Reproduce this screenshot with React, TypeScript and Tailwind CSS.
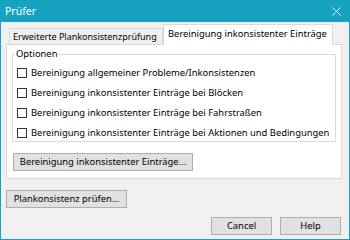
import React from "react";

const font = { fontFamily: '"Noto Sans", "Open Sans", Arial, sans-serif' };

function Check({ label }: { label: string }) {
  return (
    <div className="flex items-center h-[20px] whitespace-nowrap">
      <div className="w-[10px] h-[10px] border border-[#333] bg-white mr-[4px] shrink-0" />
      <span className="text-[9.4px] text-black leading-none">{label}</span>
    </div>
  );
}

function Btn({ label, w }: { label: string; w: string }) {
  return (
    <div
      className={`${w} h-[18px] border border-[#adadad] bg-[#e1e1e1] flex items-center justify-center text-[9.4px] text-black leading-none whitespace-nowrap`}
    >
      {label}
    </div>
  );
}

export default function App() {
  return (
    <div
      className="w-[350px] h-[240px] bg-[#f0f0f0] border-x border-b border-[#18a2c1] flex flex-col overflow-hidden"
      style={font}
    >
      <div className="h-[22px] bg-[#18a2c1] flex items-center justify-between pl-[4px] pr-[8px] shrink-0">
        <span className="text-white text-[10.5px] leading-none">Prüfer</span>
        <svg width="9" height="9" viewBox="0 0 9 9">
          <path d="M0.5 0.5L8.5 8.5M8.5 0.5L0.5 8.5" stroke="#ffffff" strokeWidth="1" />
        </svg>
      </div>
      <div className="pl-[5px] pr-[7px] pt-[1px]">
        <div className="flex items-end h-[21px] pl-[3px] whitespace-nowrap">
          <div className="h-[16px] w-[154px] border border-b-0 border-[#d9d9d9] bg-[#f0f0f0] flex items-center pl-[3px] text-[9px] leading-none overflow-hidden">
            Erweiterte Plankonsistenzprüfung
          </div>
          <div className="h-[21px] w-[170px] border border-b-0 border-[#d9d9d9] bg-white flex items-center pl-[4px] text-[9.4px] leading-none relative top-[1px] pb-[2px]">
            Bereinigung inkonsistenter Einträge
          </div>
        </div>
        <div className="h-[135px] border border-[#d9d9d9] bg-white px-[5px] pt-[9px]">
          <div className="relative border border-[#dcdcdc] h-[88px] pt-[8px] pl-[4px]">
            <span className="absolute -top-[6px] left-[2px] bg-white px-[1px] text-[9.4px] leading-none">
              Optionen
            </span>
            <Check label="Bereinigung allgemeiner Probleme/Inkonsistenzen" />
            <Check label="Bereinigung inkonsistenter Einträge bei Blöcken" />
            <Check label="Bereinigung inkonsistenter Einträge bei Fahrstraßen" />
            <Check label="Bereinigung inkonsistenter Einträge bei Aktionen und Bedingungen" />
          </div>
          <div className="mt-[11px] ml-[1px]">
            <Btn label="Bereinigung inkonsistenter Einträge..." w="w-[180px]" />
          </div>
        </div>
        <div className="mt-[11px] ml-[0px]">
          <Btn label="Plankonsistenz prüfen..." w="w-[121px]" />
        </div>
        <div className="flex justify-end gap-[8px] mt-[9px] pr-[1px]">
          <Btn label="Cancel" w="w-[61px]" />
          <Btn label="Help" w="w-[61px]" />
        </div>
      </div>
    </div>
  );
}
